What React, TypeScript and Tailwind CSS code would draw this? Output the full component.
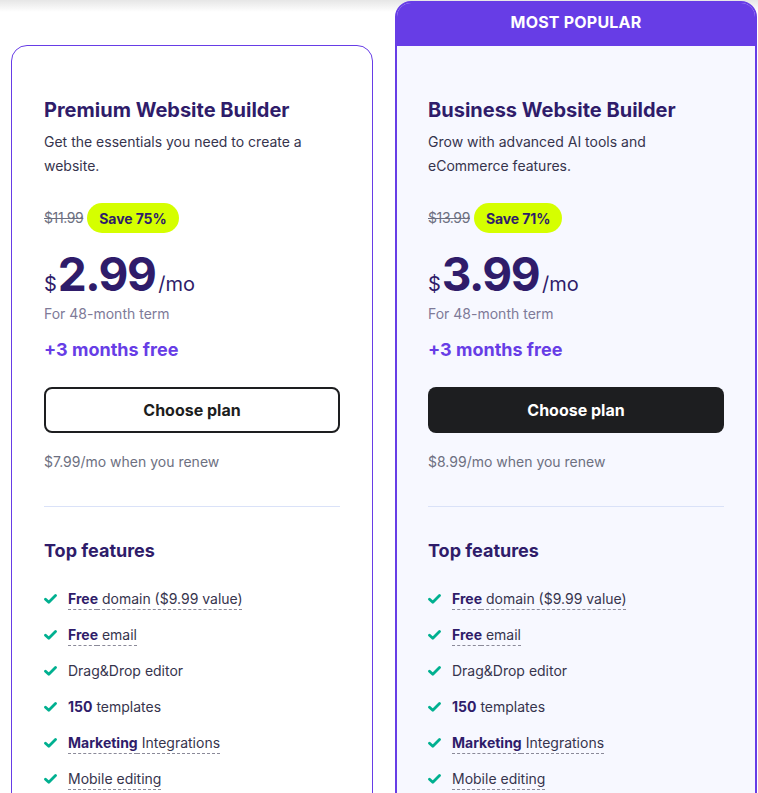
import React from "react";

const font = { fontFamily: "Inter, 'Noto Sans', sans-serif" };

function Check() {
  return (
    <svg width="13" height="10" viewBox="0 0 13 10" className="shrink-0">
      <path d="M1.5 5.2 L4.8 8.3 L11.5 1.6" fill="none" stroke="#00b090" strokeWidth="2.8" strokeLinecap="round" strokeLinejoin="round" />
    </svg>
  );
}

type Feature = { bold?: string; rest: string; dashed: boolean };

const features: Feature[] = [
  { bold: "Free", rest: " domain ($9.99 value)", dashed: true },
  { bold: "Free", rest: " email", dashed: true },
  { rest: "Drag&Drop editor", dashed: false },
  { bold: "150", rest: " templates", dashed: false },
  { bold: "Marketing", rest: " Integrations", dashed: true },
  { rest: "Mobile editing", dashed: true },
];

function CardBody({
  title,
  desc,
  oldPrice,
  save,
  price,
  renew,
  filled,
}: {
  title: string;
  desc: React.ReactNode;
  oldPrice: string;
  save: string;
  price: string;
  renew: string;
  filled: boolean;
}) {
  return (
    <div className="flex flex-col pt-[50px]">
      <h2 className="text-[20px] leading-[28px] font-bold text-[#2f1c6a]">{title}</h2>
      <p className="mt-[6px] text-[14px] leading-[24px] text-[#36344d]">{desc}</p>
      <div className="mt-[25px] flex items-center gap-[4px] h-[30px]">
        <span className="text-[14px] leading-[20px] text-[#6d7081] line-through tracking-[-0.4px]">{oldPrice}</span>
        <span className="h-[30px] px-[12px] rounded-full bg-[#d5ff00] text-[#2f1c6a] text-[14px] font-bold flex items-center tracking-[-0.1px]">
          {save}
        </span>
      </div>
      <div className="mt-[17px] flex items-baseline h-[48px] text-[#2f1c6a]">
        <span className="text-[20px] leading-[48px] text-[#2f1c6a] mr-px">$</span>
        <span className="text-[46px] leading-[48px] font-bold tracking-[-1.5px]">{price}</span>
        <span className="text-[20px] leading-[48px] ml-[3px]">/mo</span>
      </div>
      <div className="mt-[6px] text-[14px] leading-[20px] text-[#7e7a98]">For 48-month term</div>
      <div className="mt-[12px] text-[18px] leading-[28px] font-bold text-[#673de6]">+3 months free</div>
      <button
        className={
          filled
            ? "mt-[23px] h-[46px] w-full rounded-[8px] bg-[#1d1e20] text-white text-[16px] font-bold"
            : "mt-[23px] h-[46px] w-full rounded-[8px] border-2 border-[#1d1e20] bg-white text-[#1d1e20] text-[16px] font-bold"
        }
      >
        Choose plan
      </button>
      <div className="mt-[19px] text-[14px] leading-[20px] text-[#6d7081]">{renew}</div>
      <div className="mt-[34px] h-px bg-[#dae2f8]" />
      <h3 className="mt-[30px] text-[18px] leading-[28px] font-bold text-[#2f1c6a]">Top features</h3>
      <ul className="mt-[24px] flex flex-col gap-[16px]">
        {features.map((f, i) => (
          <li key={i} className="flex items-center gap-[11px] h-[20px]">
            <Check />
            <span
              className={
                f.dashed
                  ? "text-[14px] leading-[20px] text-[#36344d] underline decoration-dashed decoration-[#8b8a99] decoration-1 underline-offset-[5px]"
                  : "text-[14px] leading-[20px] text-[#36344d]"
              }
            >
              {f.bold && <b className="font-bold text-[#2f1c6a]">{f.bold}</b>}
              {f.rest}
            </span>
          </li>
        ))}
      </ul>
    </div>
  );
}

export default function App() {
  return (
    <div
      className="w-[758px] h-[793px] overflow-hidden bg-[linear-gradient(to_bottom,#e6e6e6_0px,#ffffff_12px)] flex items-start gap-[22px] pl-[11px]"
      style={font}
    >
      <div className="mt-[45px] w-[362px] h-[800px] shrink-0 rounded-[16px] border border-[#673de6] bg-white px-[32px]">
        <CardBody
          title="Premium Website Builder"
          desc={<>Get the essentials you need to create a<br />website.</>}
          oldPrice="$11.99"
          save="Save 75%"
          price="2.99"
          renew="$7.99/mo when you renew"
          filled={false}
        />
      </div>
      <div className="mt-[1px] w-[362px] h-[850px] shrink-0 rounded-[16px] border-2 border-[#673de6] bg-[#f7f8ff] overflow-hidden">
        <div className="h-[43px] pb-[5px] bg-[#673de6] text-white text-[16px] font-bold flex items-center justify-center tracking-[0.2px]">
          MOST POPULAR
        </div>
        <div className="px-[31px]">
          <CardBody
            title="Business Website Builder"
            desc={<>Grow with advanced AI tools and<br />eCommerce features.</>}
            oldPrice="$13.99"
            save="Save 71%"
            price="3.99"
            renew="$8.99/mo when you renew"
            filled={true}
          />
        </div>
      </div>
    </div>
  );
}
